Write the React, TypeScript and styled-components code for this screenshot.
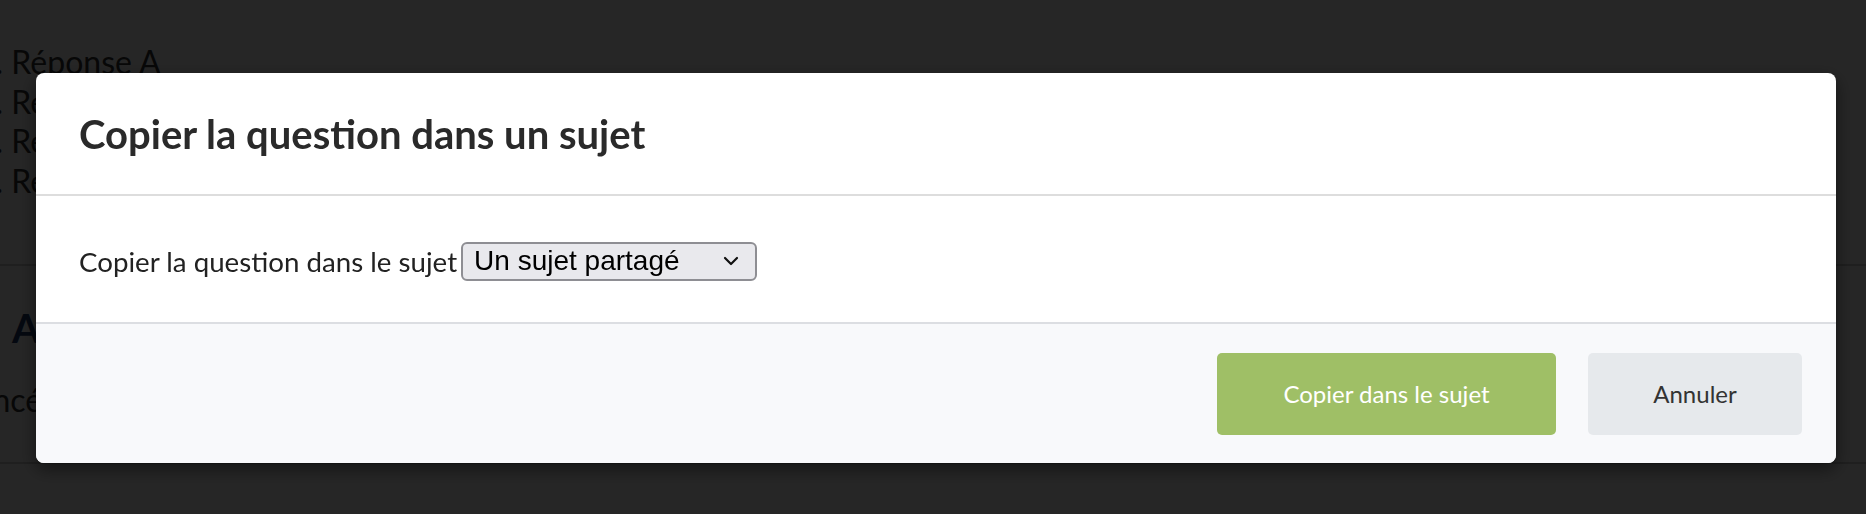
import React from "react";
import styled, { createGlobalStyle } from "styled-components";

const GlobalStyle = createGlobalStyle`
  html, body { margin: 0; padding: 0; }
  body {
    width: 1866px;
    height: 514px;
    overflow: hidden;
    background: #ffffff;
    font-family: Lato, "Noto Sans", sans-serif;
  }
`;

const Page = styled.div`
  width: 1866px;
  height: 514px;
  background: #ffffff;
  color: #333333;
  overflow: hidden;
`;

const AnswerList = styled.ol`
  margin: 42px 0 0 -23px;
  padding: 0;
  list-style: none;
  font-size: 32px;
  line-height: 39.5px;
`;

const Answer = styled.li<{ $n: number }>`
  &::before { content: "${(p) => p.$n}. "; }
`;

const Divider = styled.hr<{ $top?: number }>`
  margin: ${(p) => p.$top ?? 0}px 0 0;
  border: 0;
  border-top: 2px solid #cccccc;
`;

const Section = styled.section`
  padding: 38px 0 0 12px;
  height: 196px;
  box-sizing: border-box;
`;

const SectionTitle = styled.h2`
  margin: 0;
  font-size: 40px;
  font-weight: 700;
  color: #1d3a6b;
  line-height: 48px;
`;

const SectionText = styled.p`
  margin: 28px 0 0 -72px;
  font-size: 32px;
`;

const Overlay = styled.div`
  position: fixed;
  inset: 0;
  background: rgba(0, 0, 0, 0.85);
`;

const Modal = styled.div`
  position: fixed;
  left: 36px;
  top: 73px;
  width: 1800px;
  height: 390px;
  background: #ffffff;
  border-radius: 8px;
  overflow: hidden;
  box-shadow: 0 6px 18px rgba(0, 0, 0, 0.5);
  display: flex;
  flex-direction: column;
`;

const ModalHeader = styled.header`
  height: 121px;
  display: flex;
  align-items: center;
  padding: 0 43px;
  border-bottom: 2px solid #dddddd;
`;

const ModalTitle = styled.h1`
  margin: 0;
  font-family: Lato, sans-serif;
  font-weight: 700;
  font-size: 40px;
  color: #2a2a2a;
`;

const ModalBody = styled.div`
  height: 128px;
  display: flex;
  align-items: center;
  padding: 4px 43px 0;
  gap: 4px;
  font-size: 27.7px;
  color: #222222;
  border-bottom: 2px solid #dcdee2;
  box-sizing: border-box;
`;

const SelectBox = styled.div`
  width: 296px;
  height: 39px;
  box-sizing: border-box;
  border: 2px solid #8e8e93;
  border-radius: 6px;
  background: #e9e9ed;
  display: flex;
  align-items: center;
  justify-content: space-between;
  padding: 0 16px 0 11px;
  font-family: "Liberation Sans", Arial, sans-serif;
  font-size: 28px;
  color: #000000;
`;

const ModalFooter = styled.footer`
  flex: 1;
  background: #f8f9fb;
  display: flex;
  align-items: center;
  justify-content: flex-end;
  gap: 32px;
  padding: 0 34px 0 0;
`;

const Button = styled.button<{ $primary?: boolean }>`
  height: 82px;
  width: ${(p) => (p.$primary ? "339px" : "214px")};
  border: 0;
  border-radius: 5px;
  background: ${(p) => (p.$primary ? "#9fbf66" : "#e6e9ec")};
  color: ${(p) => (p.$primary ? "#ffffff" : "#333333")};
  font-family: Lato, "Open Sans", sans-serif;
  font-size: 24px;
  cursor: pointer;
`;

export default function App() {
  return (
    <>
      <GlobalStyle />
      <Page>
        <AnswerList>
          <Answer $n={1}>Réponse A</Answer>
          <Answer $n={1}>Réponse B</Answer>
          <Answer $n={1}>Réponse C</Answer>
          <Answer $n={1}>Réponse D</Answer>
        </AnswerList>
        <Divider $top={64} />
        <Section>
          <SectionTitle>A</SectionTitle>
          <SectionText>Avancé</SectionText>
        </Section>
        <Divider />
      </Page>
      <Overlay />
      <Modal role="dialog" aria-labelledby="copy-title">
        <ModalHeader>
          <ModalTitle id="copy-title">Copier la question dans un sujet</ModalTitle>
        </ModalHeader>
        <ModalBody>
          <span>Copier la question dans le sujet</span>
          <SelectBox>
            <span>Un sujet partagé</span>
            <svg width="16" height="10" viewBox="0 0 16 10" fill="none">
              <path d="M2 2l6 6 6-6" stroke="#111" strokeWidth="2.2" strokeLinecap="round" strokeLinejoin="round" />
            </svg>
          </SelectBox>
        </ModalBody>
        <ModalFooter>
          <Button $primary>Copier dans le sujet</Button>
          <Button>Annuler</Button>
        </ModalFooter>
      </Modal>
    </>
  );
}
